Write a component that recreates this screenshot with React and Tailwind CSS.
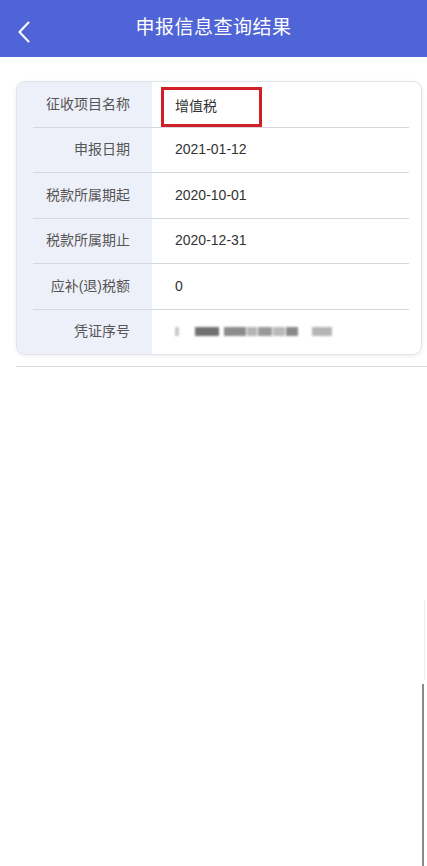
const rows = [
  { label: '征收项目名称', value: '增值税', boxed: true },
  { label: '申报日期', value: '2021-01-12' },
  { label: '税款所属期起', value: '2020-10-01' },
  { label: '税款所属期止', value: '2020-12-31' },
  { label: '应补(退)税额', value: '0' },
  { label: '凭证序号', value: null },
]

// blurred voucher number, drawn as grey blocks
const blurBlocks = [
  { w: 4, c: 'bg-[#c8c8c8]' },
  { w: 14, c: 'bg-transparent' },
  { w: 24, c: 'bg-[#707070]' },
  { w: 3, c: 'bg-transparent' },
  { w: 22, c: 'bg-[#8c8c8c]' },
  { w: 10, c: 'bg-[#b4b4b4]' },
  { w: 14, c: 'bg-[#9a9a9a]' },
  { w: 12, c: 'bg-[#bababa]' },
  { w: 12, c: 'bg-[#8a8a8a]' },
  { w: 12, c: 'bg-transparent' },
  { w: 20, c: 'bg-[#b5b5b5]' },
]

const App = () => {
  return (
    <div className="relative min-h-[866px] bg-white font-['Liberation_Sans','Noto_Sans_CJK_SC',sans-serif]">
      <header className="relative flex h-[57px] items-center justify-center bg-[#4f64d6]">
        <svg className="absolute left-[17px] top-[21px]" width="14" height="22" viewBox="0 0 14 22" fill="none">
          <path d="M11.5 1.5 L2.5 11 L11.5 20.5" stroke="white" strokeWidth="2" strokeLinecap="round" strokeLinejoin="round" />
        </svg>
        <h1 className="text-[19px] font-normal tracking-[0.5px] text-white">申报信息查询结果</h1>
      </header>

      <div className="ml-[16px] mr-[5px] mt-[24px] overflow-hidden rounded-[9px] border border-[#e2e3e8] bg-[linear-gradient(to_right,#eef0f9_135px,white_135px)] shadow-[0_1px_4px_rgba(0,0,0,0.08)]">
        {rows.map((row, i) => (
          <div key={row.label}>
            <div className="flex h-[44.5px] items-center">
              <div className="w-[135px] pr-[22px] text-right text-[14px] text-[#555]">{row.label}</div>
              <div className="flex h-full flex-1 items-center pl-[9px] text-[14px] text-[#333]">
                {row.boxed ? (
                  <div className="mt-[5px] flex h-[39.5px] w-[101px] items-center border-[3px] border-[#d11f2a] pl-[11px]">
                    {row.value}
                  </div>
                ) : row.value !== null ? (
                  <span className="pl-[14px]">{row.value}</span>
                ) : (
                  <div className="flex items-center pl-[14px] blur-[0.8px]">
                    {blurBlocks.map((b, j) => (
                      <div key={j} className={`mr-[1px] h-[9px] ${b.c}`} style={{ width: b.w }} />
                    ))}
                  </div>
                )}
              </div>
            </div>
            {i < rows.length - 1 && <div className="ml-[16px] mr-[12px] h-px bg-[#d6d7dc]" />}
          </div>
        ))}
      </div>

      <div className="ml-[16px] mt-[11px] h-px bg-[#dcdcdc]" />

      {/* scroll indicator */}
      <div className="absolute right-[2px] top-[600px] h-[80px] w-px bg-[#eeeeee]" />
      <div className="absolute right-[3px] top-[684px] h-[182px] w-[2px] bg-[#8a8a8a]" />
    </div>
  )
}

export default App
